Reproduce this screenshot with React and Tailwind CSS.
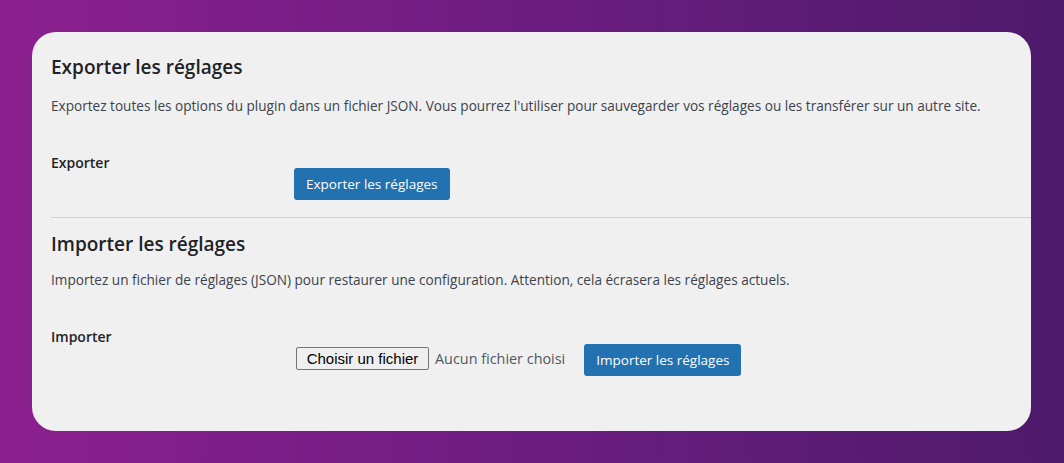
import { useState } from 'react';

const font = { fontFamily: '"Open Sans", "Noto Sans", sans-serif' };

function PrimaryButton({ children, className = '' }) {
  return (
    <button
      type="button"
      className={`h-8 rounded-[3px] bg-[#2271b1] px-3 text-[13.5px] text-white ${className}`}
    >
      {children}
    </button>
  );
}

function FilePicker() {
  const [name] = useState(null);
  return (
    <div className="mt-[3px] flex items-center">
      <button
        type="button"
        className="h-[23px] w-[133px] rounded-[2px] border border-[#767676] bg-[#efefef] text-[15px] text-black"
        style={{ fontFamily: '"Liberation Sans", Arial, sans-serif' }}
      >
        Choisir un fichier
      </button>
      <span className="ml-[6px] text-[14.4px] text-[#50575e]">{name || 'Aucun fichier choisi'}</span>
    </div>
  );
}

export default function App() {
  return (
    <div
      className="h-[463px] w-[1064px] bg-gradient-to-r from-[#8c1f8f] via-[#6c1d80] to-[#4e1a6a] p-8 pr-[33px]"
      style={font}
    >
      <div className="h-[399px] overflow-hidden rounded-[24px] bg-[#f0f0f1] pl-[19px] pt-[15px]">
        {/* Export section */}
        <h2 className="text-[19px] font-semibold leading-[40px] text-[#1d2327]">Exporter les réglages</h2>
        <p className="mt-[7px] text-[13.6px] leading-[24px] text-[#3c434a]">
          Exportez toutes les options du plugin dans un fichier JSON. Vous pourrez l'utiliser pour sauvegarder vos réglages ou les transférer sur un autre site.
        </p>
        <div className="mt-[35px] flex">
          <div className="w-[243px] text-[14px] font-semibold leading-[20px] text-[#1d2327]">Exporter</div>
          <PrimaryButton className="mt-[15px]">Exporter les réglages</PrimaryButton>
        </div>
        <hr className="mt-[17px] border-t border-[#d0d0d3]" />

        {/* Import section */}
        <h2 className="mt-[6px] text-[19px] font-semibold leading-[40px] text-[#1d2327]">Importer les réglages</h2>
        <p className="mt-[4px] text-[13.6px] leading-[24px] text-[#3c434a]">
          Importez un fichier de réglages (JSON) pour restaurer une configuration. Attention, cela écrasera les réglages actuels.
        </p>
        <div className="mt-[35px] flex">
          <div className="w-[245px] text-[14px] font-semibold leading-[20px] text-[#1d2327]">Importer</div>
          <div className="mt-[17px] flex items-start">
            <FilePicker />
            <PrimaryButton className="ml-[19px]">Importer les réglages</PrimaryButton>
          </div>
        </div>
      </div>
    </div>
  );
}
